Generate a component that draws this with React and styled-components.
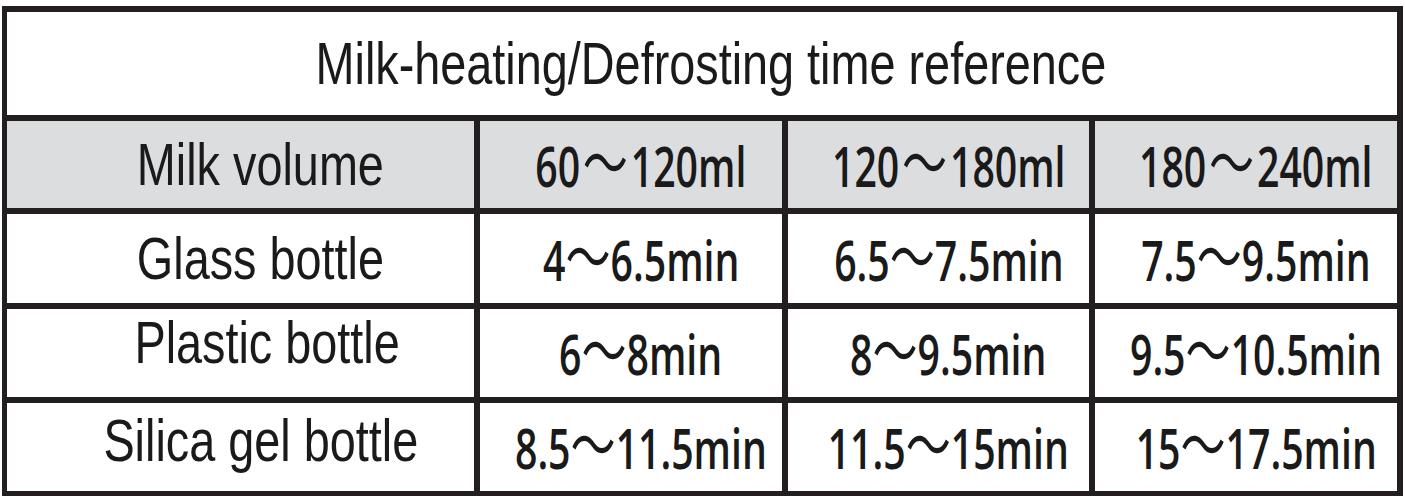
import styled, { createGlobalStyle } from 'styled-components'

const Global = createGlobalStyle`
  html, body { margin: 0; padding: 0; background: #fff; }
  body { width: 1405px; height: 496px; overflow: hidden; }
`

const Page = styled.div`
  padding: 6px 2px 0 2px;
`

const Table = styled.div`
  display: grid;
  grid-template-columns: 467px 302px 301px 302px;
  grid-template-rows: 103px 87px 89px 88px 88px;
  gap: 6px;
  padding: 6px 6px 5px 5px;
  width: 1401px;
  box-sizing: border-box;
  background: #231f20;
`

const Cell = styled.div`
  background: ${(p) => (p.$head ? '#dcdddf' : '#fff')};
  display: flex;
  align-items: center;
  justify-content: center;
  white-space: nowrap;
  color: #1a1a1a;
`

const Title = styled(Cell)`
  grid-column: 1 / -1;
  padding-left: 18px;
  font-family: "Liberation Sans", Arial, sans-serif;
  font-size: 60px;
`

// label column: text sits a little off-centre in the source chart
const Label = styled(Cell)`
  padding-left: ${(p) => p.$shift ?? 40}px;
  padding-bottom: ${(p) => p.$lift ?? 0}px;
  font-family: "Liberation Sans", Arial, sans-serif;
  font-size: 60px;
`

const Value = styled(Cell)`
  padding-left: ${(p) => p.$shift ?? 20}px;
  font-family: "Open Sans", "Liberation Sans", sans-serif;
  font-weight: 600;
  font-size: 56px;
`

const Squeeze = styled.span`
  display: inline-block;
  transform: scaleX(${(p) => p.$x});
  transform-origin: center;
`

const Tilde = styled.span`
  font-family: "Noto Sans CJK SC", sans-serif;
  font-weight: 400;
  font-size: 1.15em;
  line-height: 1;
  margin: 0 ${(p) => p.$gap || 0}px;
`

const rows = [
  { label: 'Glass bottle', values: [['4', '6.5min'], ['6.5', '7.5min'], ['7.5', '9.5min']] },
  { label: 'Plastic bottle', shift: 54, lift: 22, values: [['6', '8min'], ['8', '9.5min'], ['9.5', '10.5min']] },
  { label: 'Silica gel bottle', lift: 14, values: [['8.5', '11.5min'], ['11.5', '15min'], ['15', '17.5min']] },
]

const heads = [['60', '120ml'], ['120', '180ml'], ['180', '240ml']]

function Range({ v, gap }) {
  return (
    <Squeeze $x={0.7}>
      {v[0]}
      <Tilde $gap={gap}>～</Tilde>
      {v[1]}
    </Squeeze>
  )
}

export default function App() {
  return (
    <Page>
      <Global />
      <Table>
        <Title>
          <Squeeze $x={0.78}>Milk-heating/Defrosting time reference</Squeeze>
        </Title>
        <Label $head>
          <Squeeze $x={0.78}>Milk volume</Squeeze>
        </Label>
        {heads.map((h) => (
          <Value $head key={h[1]}>
            <Range v={h} gap={4} />
          </Value>
        ))}
        {rows.map((r) => [
          <Label key={r.label} $shift={r.shift} $lift={r.lift}>
            <Squeeze $x={0.78}>{r.label}</Squeeze>
          </Label>,
          ...r.values.map((v, i) => (
            <Value key={r.label + i}>
              <Range v={v} />
            </Value>
          )),
        ])}
      </Table>
    </Page>
  )
}
